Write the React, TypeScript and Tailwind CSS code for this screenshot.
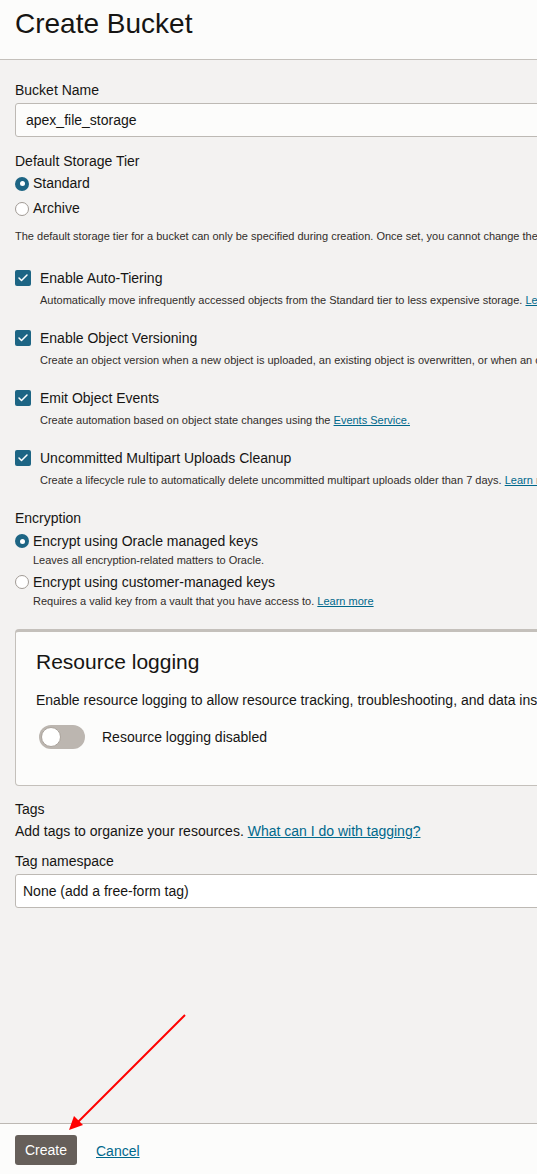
import { Check } from "lucide-react";

const font = { fontFamily: '"Liberation Sans", Arial, sans-serif' };

function Radio({ checked }: { checked?: boolean }) {
  return checked ? (
    <span className="grid size-[14px] shrink-0 place-items-center rounded-full bg-[#1d6584]">
      <span className="size-[5px] rounded-full bg-white" />
    </span>
  ) : (
    <span className="size-[14px] shrink-0 rounded-full border border-[#a19b95] bg-white" />
  );
}

function CheckBox() {
  return (
    <span className="grid size-[16px] shrink-0 place-items-center rounded-[2px] bg-[#1d6584] text-white">
      <Check className="size-[12px]" strokeWidth={3} aria-hidden />
    </span>
  );
}

const options = [
  {
    title: "Enable Auto-Tiering",
    text: "Automatically move infrequently accessed objects from the Standard tier to less expensive storage.",
    link: "Learn more",
  },
  {
    title: "Enable Object Versioning",
    text: "Create an object version when a new object is uploaded, an existing object is overwritten, or when an object is deleted.",
  },
  {
    title: "Emit Object Events",
    text: "Create automation based on object state changes using the",
    link: "Events Service.",
  },
  {
    title: "Uncommitted Multipart Uploads Cleanup",
    text: "Create a lifecycle rule to automatically delete uncommitted multipart uploads older than 7 days.",
    link: "Learn more",
  },
];

export default function App() {
  return (
    <div
      className="relative flex h-[1174px] w-[537px] flex-col overflow-hidden whitespace-nowrap bg-[#f3f2f1] text-[#161513]"
      style={font}
    >
      <header className="h-[60px] shrink-0 border-b border-[#c4c0bb] bg-[#fcfcfb] pl-[15px] pt-[10px]">
        <h1 className="text-[28px] leading-[28px]">Create Bucket</h1>
      </header>

      <main className="flex-1 pl-[15px]">
        <div className="mt-[20px] text-[14px] leading-[20px]">Bucket Name</div>
        <div className="mt-[3px] flex h-[34px] w-[600px] items-center rounded-[3px] border border-[#bdb9b4] bg-[#fcfcfb] pl-[10px] text-[14px]">
          apex_file_storage
        </div>

        <div className="mt-[14px] text-[14px] leading-[20px]">Default Storage Tier</div>
        <div className="flex h-[25px] items-center gap-[4px] text-[14px]">
          <Radio checked />
          Standard
        </div>
        <div className="flex h-[25px] items-center gap-[4px] text-[14px]">
          <Radio />
          Archive
        </div>
        <p className="mt-[7px] text-[11px] leading-[16px] text-[#312d2a]">
          The default storage tier for a bucket can only be specified during creation. Once set, you cannot change the
          default storage tier.
        </p>

        <div className="mt-[24px] flex flex-col gap-[20px]">
          {options.map((o) => (
            <div key={o.title}>
              <div className="flex h-[20px] items-center gap-[9px] text-[14px]">
                <CheckBox />
                {o.title}
              </div>
              <p className="mt-[4px] pl-[25px] text-[11px] leading-[16px] text-[#312d2a]">
                {o.text}{" "}
                {o.link && <a className="text-[#00688c] underline">{o.link}</a>}
              </p>
            </div>
          ))}
        </div>

        <div className="mt-[20px] text-[14px] leading-[20px]">Encryption</div>
        <div className="mt-[3px] flex h-[20px] items-center gap-[4px] text-[14px]">
          <Radio checked />
          Encrypt using Oracle managed keys
        </div>
        <p className="mt-[1px] pl-[18px] text-[11px] leading-[16px] text-[#312d2a]">
          Leaves all encryption-related matters to Oracle.
        </p>
        <div className="mt-[4px] flex h-[20px] items-center gap-[4px] text-[14px]">
          <Radio />
          Encrypt using customer-managed keys
        </div>
        <p className="mt-[1px] pl-[18px] text-[11px] leading-[16px] text-[#312d2a]">
          Requires a valid key from a vault that you have access to.{" "}
          <a className="text-[#00688c] underline">Learn more</a>
        </p>

        <section className="mt-[20px] w-[600px] rounded-[4px] border border-t-[3px] border-[#c4c0bb] bg-[#fcfcfb] px-[20px] pb-[36px] pt-[16px]">
          <h2 className="text-[21px] leading-[28px]">Resource logging</h2>
          <p className="mt-[14px] text-[14px] leading-[20px]">
            Enable resource logging to allow resource tracking, troubleshooting, and data insights.
          </p>
          <div className="mt-[15px] flex items-center gap-[17px] pl-[3px] text-[14px]">
            <span className="flex h-[24px] w-[46px] items-center rounded-full bg-[#bcb6b0] px-[2px]">
              <span className="size-[20px] rounded-full border border-[#aaa39c] bg-white" />
            </span>
            Resource logging disabled
          </div>
        </section>

        <div className="mt-[13px] text-[14px] leading-[20px]">Tags</div>
        <p className="mt-[2px] text-[14px] leading-[20px]">
          Add tags to organize your resources.{" "}
          <a className="text-[#00688c] underline">What can I do with tagging?</a>
        </p>
        <div className="mt-[10px] text-[14px] leading-[20px]">Tag namespace</div>
        <div className="mt-[3px] flex h-[34px] w-[600px] items-center rounded-[3px] border border-[#bdb9b4] bg-white pl-[7px] text-[14px]">
          None (add a free-form tag)
        </div>
      </main>

      <footer className="flex h-[51px] shrink-0 items-start gap-[19px] border-t border-[#bcb8b3] bg-[#fcfcfb] pl-[15px] pt-[11px]">
        <button className="h-[30px] w-[62px] rounded-[3px] bg-[#665f5a] text-[14px] text-white">Create</button>
        <a className="mt-[6px] text-[14px] text-[#00688c] underline">Cancel</a>
      </footer>

      <svg className="absolute left-0 top-0" width="537" height="1174" aria-hidden>
        <line x1="185" y1="1015" x2="76" y2="1124" stroke="#ff0000" strokeWidth="2" />
        <polygon points="69,1130 74,1116 83,1125" fill="#ff0000" />
      </svg>
    </div>
  );
}
